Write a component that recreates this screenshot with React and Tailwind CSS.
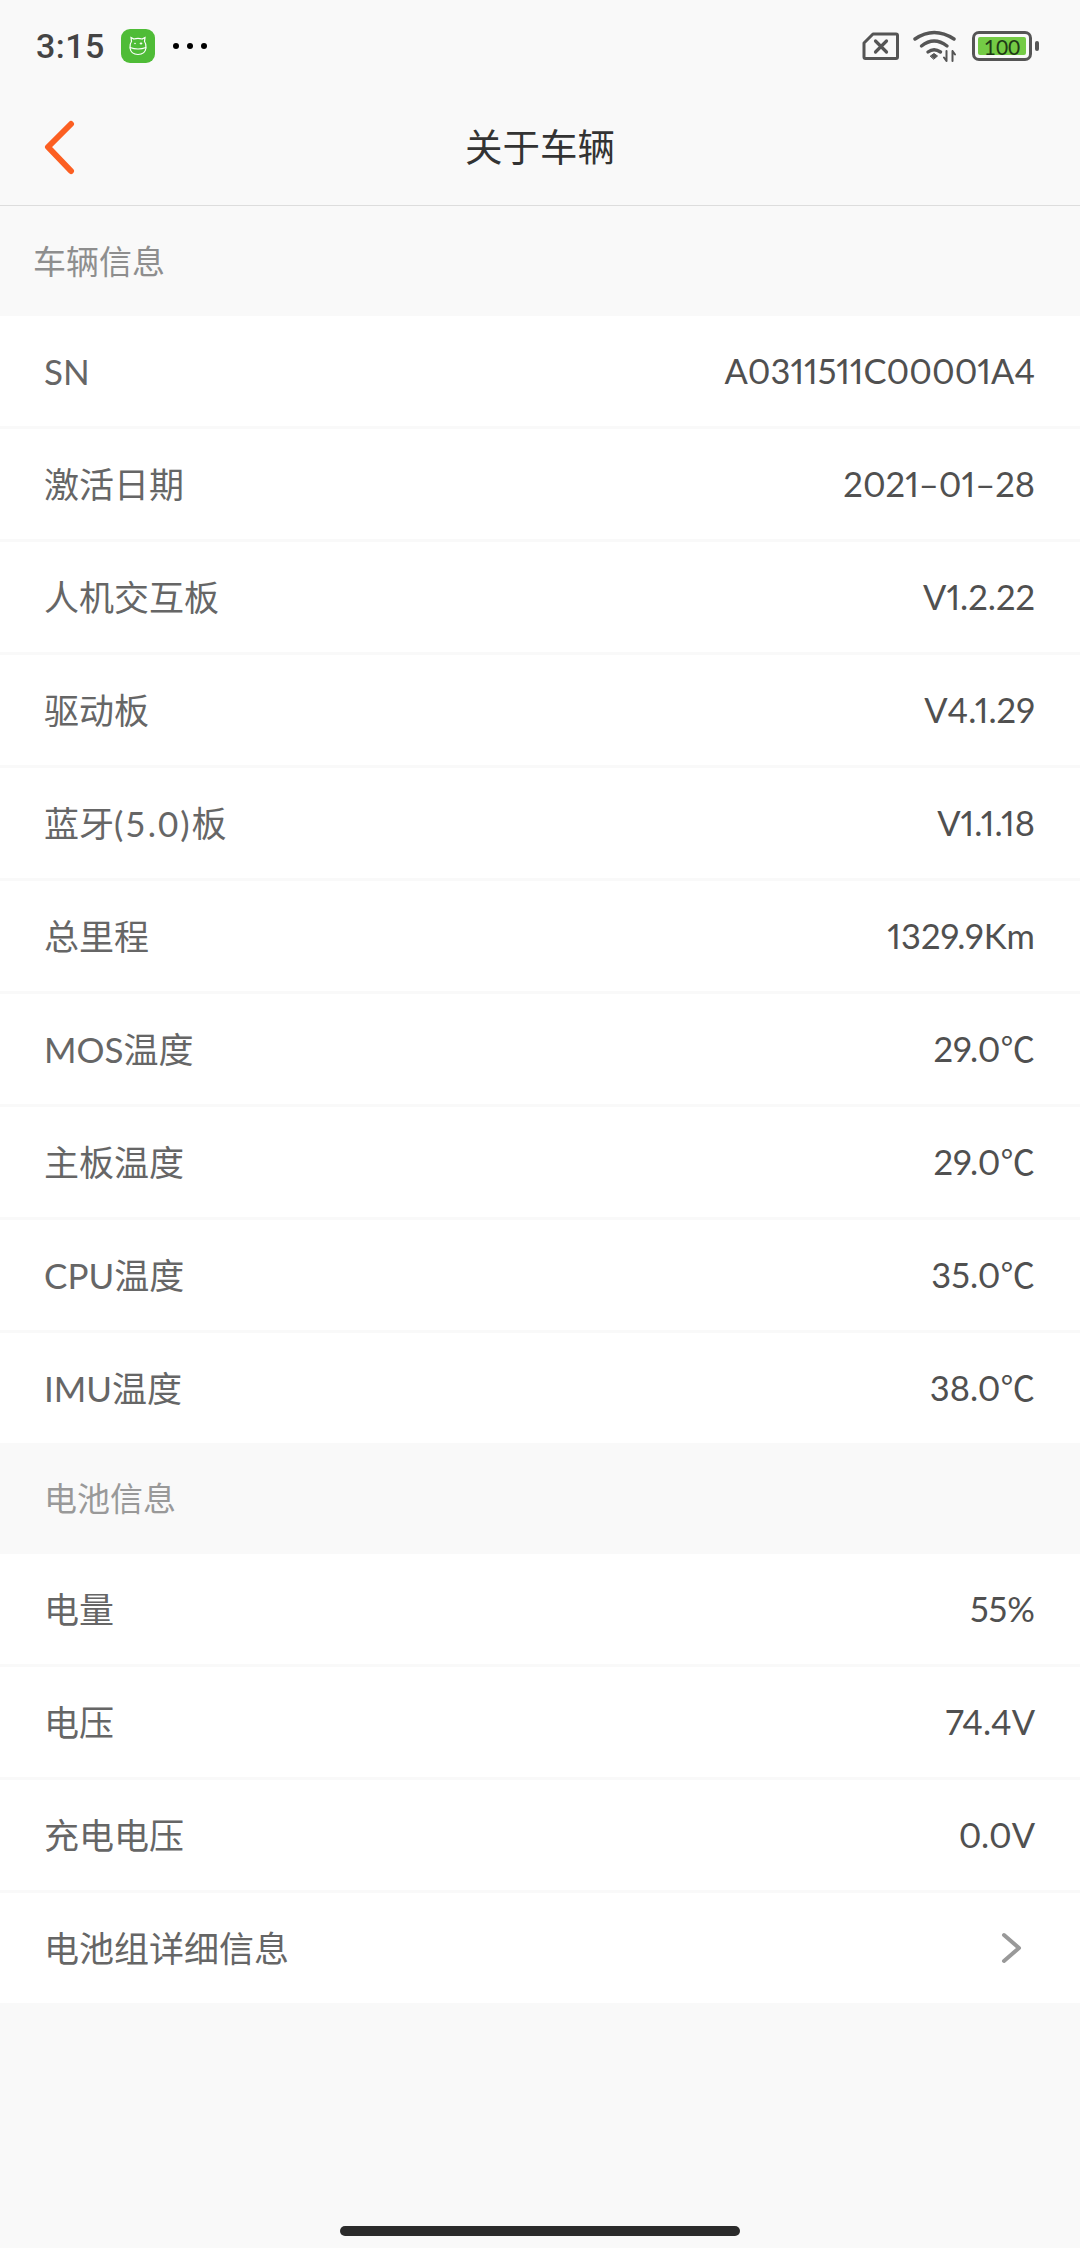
import { Fragment } from 'react';

const font = "font-['Lato','Noto_Sans_CJK_SC',sans-serif]";

const vehicleRows = [
  ['SN', 'A0311511C00001A4'],
  ['激活日期', '2021–01–28'],
  ['人机交互板', 'V1.2.22'],
  ['驱动板', 'V4.1.29'],
  [<>蓝牙<span className="tracking-[2px]">(5.0)</span>板</>, 'V1.1.18'],
  ['总里程', '1329.9Km'],
  ['MOS温度', '29.0℃'],
  ['主板温度', '29.0℃'],
  ['CPU温度', '35.0℃'],
  ['IMU温度', '38.0℃'],
];

const batteryRows = [
  ['电量', '55%'],
  ['电压', '74.4V'],
  ['充电电压', '0.0V'],
];

function AppBadge() {
  return (
    <div className="w-[34px] h-[34px] rounded-[9px] bg-[#4fbc37] flex items-center justify-center">
      <svg width="26" height="26" viewBox="0 0 26 26" fill="none" stroke="#fff" strokeWidth="1.2">
        <path d="M6.500 8.500 L6 4.500 L9 6 Q13 4.800 17 6 L20 4.500 L19.500 8.500 Q21.500 11 21 15 Q20 21.500 13 21.500 Q6 21.500 5 15 Q4.500 11 6.500 8.500Z" />
        <path d="M5 14.500 Q13 17.500 21 14.500" />
        <circle cx="10" cy="10.500" r="0.800" fill="#fff" stroke="none" />
        <path d="M16 9.200 V11.800 M14.700 10.500 H17.300" strokeWidth="0.900" />
      </svg>
    </div>
  );
}

function StatusIcons() {
  return (
    <div className="flex items-center">
      <svg width="37" height="30" viewBox="0 0 37 30" fill="none" stroke="#555" strokeWidth="3" strokeLinejoin="round">
        <path d="M11 3 H34 Q35.500 3 35.500 4.500 V26 Q35.500 27.500 34 27.500 H3.500 Q2 27.500 2 26 V12 Z" />
        <path d="M13.500 10 L24.500 21 M24.500 10 L13.500 21" strokeLinecap="round" strokeWidth="3.200" />
      </svg>
      <svg className="ml-[14px]" width="45" height="32" viewBox="0 0 45 32" fill="none" stroke="#555" strokeWidth="3.400" strokeLinecap="round">
        <path d="M2 9 Q21 -4 41 9" />
        <path d="M8.500 16 Q21 6 34 16" />
        <path d="M15 22 Q21 17.500 27.500 22" />
        <path d="M17.500 26 L21 23.500 L24.500 26 L21 29 Z" fill="#555" strokeWidth="1" />
        <path d="M33.500 21 V31 M31 27.500 L33.500 31" strokeWidth="2" />
        <path d="M39.500 31 V21 M39.500 21 L42 24.500" strokeWidth="2" />
      </svg>
      <div className="ml-[14px] flex items-center">
        <div className="w-[60px] h-[30px] rounded-[7px] border-[3.5px] border-[#555] p-[3px] flex">
          <div className="flex-1 rounded-[2px] bg-[#74cb45] flex items-center justify-center text-[21px] leading-none text-[#1f3a17] font-['Lato',sans-serif]">
            100
          </div>
        </div>
        <div className="ml-[3px] w-[4px] h-[10px] rounded-[2px] bg-[#555]" />
      </div>
    </div>
  );
}

function Row({ label, value, divider, children }) {
  return (
    <Fragment>
      <div className="h-[110px] bg-white flex items-center justify-between pl-[44px] pr-[45px]">
        <span className="text-[35px] leading-[50px] text-[#666] pb-[1px]">{label}</span>
        {value && <span className="text-[34.500px] leading-[50px] text-[#505050] pb-[1px] proportional-nums">{value}</span>}
        {children}
      </div>
      {divider && <div className="h-[3px] bg-[#f9f9f9]" />}
    </Fragment>
  );
}

export default function App() {
  return (
    <div className={`w-[1080px] h-[2248px] bg-[#f9f9f9] flex flex-col ${font}`}>
      {/* status bar */}
      <div className="h-[90px] pt-[2px] pl-[36px] pr-[41px] flex items-center justify-between">
        <div className="flex items-center">
          <span className="text-[34px] font-medium text-[#444] tracking-[0.5px] font-['Roboto',sans-serif]">3:15</span>
          <div className="ml-[16px]"><AppBadge /></div>
          <div className="ml-[18px] flex gap-[8px]">
            <div className="w-[6px] h-[6px] rounded-full bg-black" />
            <div className="w-[6px] h-[6px] rounded-full bg-black" />
            <div className="w-[6px] h-[6px] rounded-full bg-black" />
          </div>
        </div>
        <StatusIcons />
      </div>

      {/* title bar */}
      <div className="h-[116px] border-b border-[#dddddd] flex items-center justify-between px-[40px]">
        <svg className="mt-[5px]" width="40" height="60" viewBox="0 0 40 60" fill="none" stroke="#fc5f22" strokeWidth="6" strokeLinecap="round" strokeLinejoin="round">
          <path d="M31 4 L8 27 L31 51" />
        </svg>
        <span className="text-[37.500px] text-[#333]">关于车辆</span>
        <div className="w-[40px]" />
      </div>

      <div className="h-[110px] flex items-center pl-[33px] pt-[2px] text-[33px] text-[#8e8e8e]">车辆信息</div>
      {vehicleRows.map(([label, value], i) => (
        <Row key={i} label={label} value={value} divider={i < vehicleRows.length - 1} />
      ))}

      <div className="h-[111px] flex items-center pl-[44px] text-[33px] text-[#999]">电池信息</div>
      {batteryRows.map(([label, value]) => (
        <Row key={label} label={label} value={value} divider />
      ))}
      <Row label="电池组详细信息">
        <svg className="mr-[12px]" width="22" height="32" viewBox="0 0 22 32" fill="none" stroke="#999" strokeWidth="4" strokeLinecap="round" strokeLinejoin="round">
          <path d="M3 3 L18 16 L3 29" />
        </svg>
      </Row>

      {/* home indicator */}
      <div className="mt-auto mb-[12px] h-[10px] w-[400px] self-center rounded-full bg-[#2b2b2b]" />
    </div>
  );
}
